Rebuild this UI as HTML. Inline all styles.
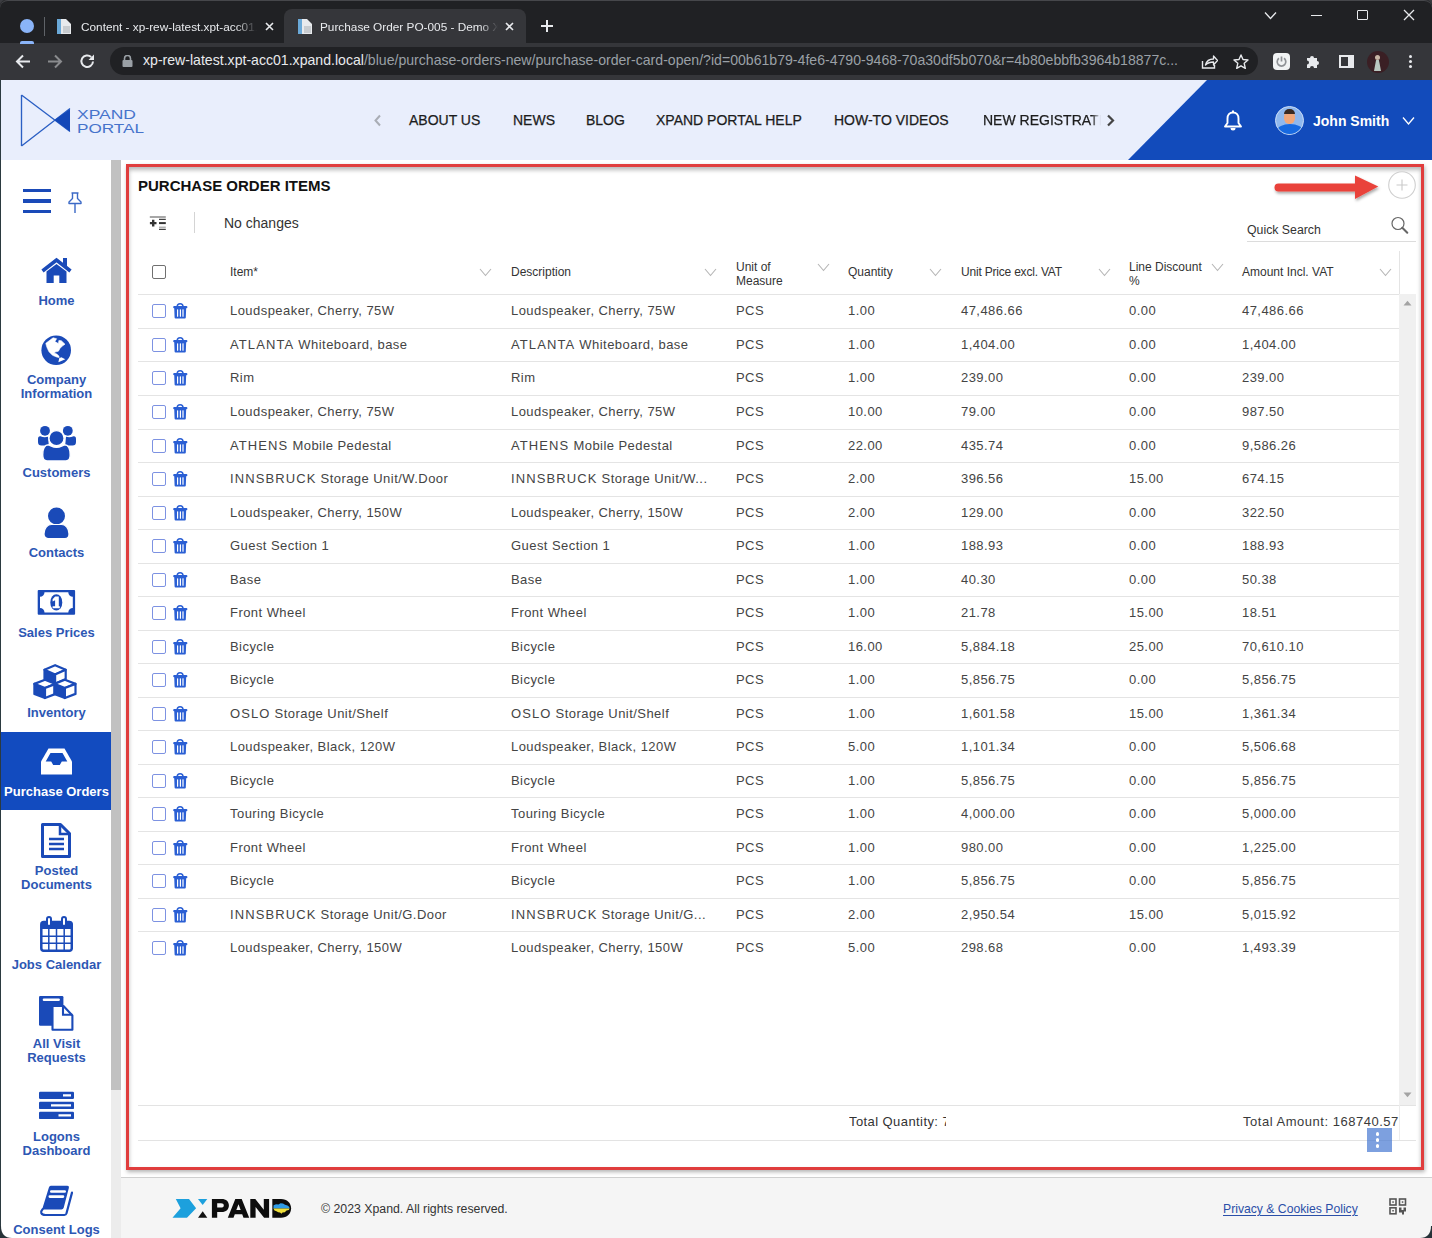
<!DOCTYPE html>
<html><head><meta charset="utf-8">
<style>
*{box-sizing:border-box;margin:0;padding:0}
html,body{width:1432px;height:1238px;overflow:hidden;background:#fff;font-family:"Liberation Sans",sans-serif}
.a{position:absolute}
#tabs{position:absolute;left:0;top:0;width:1432px;height:43px;background:#202124;border-top:1px solid #46474b;border-radius:8px 8px 0 0;box-shadow:0 0 0 1px #2a2b2e}
#tool{position:absolute;left:0;top:43px;width:1432px;height:37px;background:#35363a}
.tab{position:absolute;color:#e8eaed;font-size:11.8px;white-space:nowrap}
#omni{position:absolute;left:110px;top:47px;width:1148px;height:28px;border-radius:14px;background:#202124}
#hdr{position:absolute;left:0;top:80px;width:1432px;height:80px;background:#e9eefc}
.nav{position:absolute;top:112px;font-size:14px;color:#1c1c1c;white-space:nowrap;-webkit-text-stroke:0.25px #1c1c1c;margin-left:1px}
#side{position:absolute;left:0;top:160px;width:111px;height:1078px;background:#fff}
#sbtrack{position:absolute;left:111px;top:160px;width:10px;height:1078px;background:#ececec}
#sbthumb{position:absolute;left:111px;top:160px;width:10px;height:930px;background:#c1c1c1}
.si{position:absolute;left:1px;width:111px;text-align:center;color:#2d57b4;font-size:13px;line-height:14px;font-weight:bold}
#main{position:absolute;left:121px;top:160px;width:1311px;height:1017px;background:#fff}
#red{position:absolute;left:126px;top:164px;width:1298px;height:1006px;border:3px solid #e03d3d;box-shadow:1px 2px 4px rgba(0,0,0,0.3),inset 0 3px 4px rgba(0,0,0,0.28)}
.row{position:absolute;left:138px;width:1261px;height:34px;border-top:1px solid #e4e4e4}
.row .c{position:absolute;top:8px;font-size:13px;color:#444;white-space:nowrap;letter-spacing:0.45px}
.row .cb{position:absolute;left:14px;top:9px;width:14px;height:14px;border:1.5px solid #7d92e2;border-radius:2px}
.row .tr{position:absolute;left:35px;top:8px}
.hc{position:absolute;font-size:12px;color:#333;line-height:13px;white-space:nowrap}
.chev{position:absolute;top:266px}
#footer{position:absolute;left:121px;top:1177px;width:1311px;height:61px;background:#f5f5f5;border-top:1px solid #cfcfcf}
</style></head><body>
<!-- browser chrome -->
<div class="a" style="left:0;top:0;width:1432px;height:12px;background:#3b3c40"></div>
<div id="tabs"></div>
<div id="tool"></div>
<div id="omni"></div>
<!-- left profile dot -->
<div class="a" style="left:20px;top:19px;width:14px;height:14px;border-radius:50%;background:#8ab4f8"></div>
<div class="a" style="left:20px;top:41px;width:14px;height:3px;border-radius:2px 2px 0 0;background:#8ab4f8"></div>
<div class="a" style="left:44px;top:17px;width:1px;height:19px;background:#5f6368"></div>
<!-- tab 1 -->
<svg class="a" style="left:56px;top:18px" width="16" height="16" viewBox="0 0 16 16"><path d="M1 1h9l5 5v10H1z" fill="#e8eaed"/><rect x="1" y="1" width="4" height="15" fill="#6aa9d8"/><path d="M7 8h7v7H7z" fill="#c8ccd0"/></svg>
<div class="tab" style="left:81px;top:19.5px;width:176px;overflow:hidden;-webkit-mask-image:linear-gradient(90deg,#000 88%,transparent)">Content - xp-rew-latest.xpt-acc01.xpand</div>
<svg class="a" style="left:265px;top:22px" width="9" height="9" viewBox="0 0 9 9"><path d="M1 1L8 8M8 1L1 8" stroke="#e8eaed" stroke-width="1.6"/></svg>
<!-- active tab -->
<div class="a" style="left:284px;top:9px;width:242px;height:35px;background:#35363a;border-radius:8px 8px 0 0"></div>
<svg class="a" style="left:297px;top:18px" width="16" height="16" viewBox="0 0 16 16"><path d="M1 1h9l5 5v10H1z" fill="#e8eaed"/><rect x="1" y="1" width="4" height="15" fill="#6aa9d8"/><path d="M7 8h7v7H7z" fill="#c8ccd0"/></svg>
<div class="tab" style="left:320px;top:19.5px;width:178px;overflow:hidden;-webkit-mask-image:linear-gradient(90deg,#000 90%,transparent)">Purchase Order PO-005 - Demo Xpand</div>
<svg class="a" style="left:505px;top:22px" width="9" height="9" viewBox="0 0 9 9"><path d="M1 1L8 8M8 1L1 8" stroke="#e8eaed" stroke-width="1.6"/></svg>
<svg class="a" style="left:540px;top:19px" width="14" height="14" viewBox="0 0 14 14"><path d="M7 1v12M1 7h12" stroke="#e8eaed" stroke-width="2"/></svg>
<!-- window controls -->
<svg class="a" style="left:1264px;top:11px" width="13" height="9" viewBox="0 0 13 9"><path d="M1 1.5l5.5 6 5.5-6" stroke="#e8eaed" stroke-width="1.3" fill="none"/></svg>
<div class="a" style="left:1311px;top:15px;width:11px;height:1.3px;background:#e8eaed"></div>
<div class="a" style="left:1357px;top:10px;width:11px;height:10px;border:1.3px solid #e8eaed;border-radius:1px"></div>
<svg class="a" style="left:1403px;top:9px" width="12" height="12" viewBox="0 0 12 12"><path d="M1 1L11 11M11 1L1 11" stroke="#e8eaed" stroke-width="1.3"/></svg>
<!-- toolbar -->
<svg class="a" style="left:15px;top:54px" width="16" height="15" viewBox="0 0 16 15"><path d="M15 7.5H2.5M8 1.5l-6 6 6 6" stroke="#e8eaed" stroke-width="2" fill="none"/></svg>
<svg class="a" style="left:47px;top:54px" width="16" height="15" viewBox="0 0 16 15"><path d="M1 7.5h12.5M8 1.5l6 6-6 6" stroke="#8a8b8e" stroke-width="2" fill="none"/></svg>
<svg class="a" style="left:79px;top:53px" width="17" height="17" viewBox="0 0 17 17"><path d="M14 8.5A5.8 5.8 0 1 1 12.2 4" stroke="#e8eaed" stroke-width="2" fill="none"/><path d="M15 1.5v5.5h-5.5z" fill="#e8eaed"/></svg>
<svg class="a" style="left:122px;top:55px" width="11" height="12" viewBox="0 0 11 12"><path d="M2.5 5V3.5a3 3 0 0 1 6 0V5" stroke="#9aa0a6" stroke-width="1.6" fill="none"/><rect x="0.5" y="5" width="10" height="7" rx="1" fill="#9aa0a6"/></svg>
<div class="a" style="left:143px;top:52px;font-size:14.1px;color:#e8eaed;white-space:nowrap">xp-rew-latest.xpt-acc01.xpand.local<span style="color:#9aa0a6">/blue/purchase-orders-new/purchase-order-card-open/?id=00b61b79-4fe6-4790-9468-70a30df5b070&amp;r=4b80ebbfb3964b18877c...</span></div>
<svg class="a" style="left:1201px;top:54px" width="17" height="15" viewBox="0 0 17 15"><path d="M1.5 7v7h12V11" stroke="#e8eaed" stroke-width="1.4" fill="none"/><path d="M4.5 11c1-4 4-6 8-6V2l4 4.5-4 4.5V8c-3 0-6 1-8 3z" stroke="#e8eaed" stroke-width="1.3" fill="none" stroke-linejoin="round"/></svg>
<svg class="a" style="left:1233px;top:54px" width="16" height="15" viewBox="0 0 16 15"><path d="M8 1l2 4.5 5 .5-3.8 3.3 1.1 5L8 11.8 3.7 14.3l1.1-5L1 6l5-.5z" stroke="#e8eaed" stroke-width="1.4" fill="none" stroke-linejoin="round"/></svg>
<div class="a" style="left:1273px;top:53px;width:17px;height:17px;border-radius:4px;background:#f1f3f4"></div>
<svg class="a" style="left:1275px;top:55px" width="13" height="13" viewBox="0 0 13 13"><path d="M4 3.3A4.3 4.3 0 1 0 9 3.3" stroke="#8f9296" stroke-width="1.7" fill="none"/><path d="M6.5 1.5v5" stroke="#8f9296" stroke-width="1.7"/></svg>
<svg class="a" style="left:1305px;top:53px" width="17" height="16" viewBox="0 0 17 16"><path d="M2 5h3a2 2 0 1 1 4 0h3v3a2 2 0 1 1 0 4v3H9a2 2 0 1 0-4 0H2v-3.5a2 2 0 1 0 0-4z" fill="#e8eaed"/></svg>
<div class="a" style="left:1339px;top:55px;width:15px;height:13px;border:2px solid #e8eaed;border-right-width:6px"></div>
<div class="a" style="left:1367px;top:51px;width:22px;height:22px;border-radius:50%;background:#3a1f24;overflow:hidden"><div style="position:absolute;left:8px;top:4px;width:5px;height:5px;border-radius:50%;background:#c9b7a6"></div><div style="position:absolute;left:7px;top:9px;width:7px;height:11px;background:#b9c7c0;clip-path:polygon(30% 0,70% 0,100% 100%,0 100%)"></div></div>
<div class="a" style="left:1409px;top:55px;width:3px;height:3px;border-radius:50%;background:#e8eaed;box-shadow:0 5px 0 #e8eaed,0 10px 0 #e8eaed"></div>

<!-- page header -->
<div id="hdr"></div>
<svg class="a" style="left:0;top:80px" width="1432" height="80" viewBox="0 80 1432 80">
<polygon points="1207,80 1432,80 1432,160 1128,160" fill="#124bbb"/>
<path d="M21.5 95V146M21.5 95L70 131.5M21.5 146L70 108.5" stroke="#2b5fc4" stroke-width="1.35" fill="none"/>
<polygon points="54.5,120 70,109 70,131.5" fill="#1448b8"/>
<text x="77" y="118.5" font-family="Liberation Sans" font-size="12.4" fill="#4673cb" textLength="59" lengthAdjust="spacingAndGlyphs">XPAND</text>
<text x="77" y="132.7" font-family="Liberation Sans" font-size="12.2" fill="#4673cb" textLength="67" lengthAdjust="spacingAndGlyphs">PORTAL</text>
</svg>
<svg class="a" style="left:373px;top:114px" width="9" height="13" viewBox="0 0 9 13"><path d="M7 1.5L2.5 6.5 7 11.5" stroke="#a9adb5" stroke-width="2" fill="none"/></svg>
<div class="nav" style="left:408px">ABOUT US</div>
<div class="nav" style="left:512px">NEWS</div>
<div class="nav" style="left:585px">BLOG</div>
<div class="nav" style="left:655px">XPAND PORTAL HELP</div>
<div class="nav" style="left:833px">HOW-TO VIDEOS</div>
<div class="nav" style="left:982px;width:118px;overflow:hidden;-webkit-mask-image:linear-gradient(90deg,#000 92%,transparent)">NEW REGISTRATION</div>
<svg class="a" style="left:1106px;top:114px" width="10" height="13" viewBox="0 0 10 13"><path d="M2 1.5L7 6.5 2 11.5" stroke="#444" stroke-width="2.2" fill="none"/></svg>
<svg class="a" style="left:1222px;top:110px" width="22" height="21" viewBox="0 0 22 21"><path d="M11 2.5c-3.5 0-5.5 2.6-5.5 6v4.5L3 16.5h16l-2.5-3.5V8.5c0-3.4-2-6-5.5-6z" stroke="#fff" stroke-width="1.9" fill="none" stroke-linejoin="round"/><path d="M8.5 18a2.5 2.5 0 0 0 5 0z" fill="#fff"/><rect x="10" y="0.5" width="2" height="2.5" fill="#fff"/></svg>
<div class="a" style="left:1275px;top:106px;width:29px;height:29px;border-radius:50%;background:#8fb8ee;overflow:hidden;border:1.5px solid #c9dcf7">
<div style="position:absolute;left:8px;top:4px;width:11px;height:13px;border-radius:45%;background:#f0a77a"></div>
<div style="position:absolute;left:8px;top:2px;width:11px;height:5px;border-radius:5px 5px 0 0;background:#3a2a22"></div>
<div style="position:absolute;left:1px;top:17px;width:26px;height:14px;border-radius:50% 50% 0 0;background:#1769e0"></div>
</div>
<div class="a" style="left:1313px;top:112.5px;font-size:14px;font-weight:bold;color:#fff;white-space:nowrap">John Smith</div>
<svg class="a" style="left:1402px;top:116px" width="13" height="10" viewBox="0 0 13 10"><path d="M1 1.5l5.5 6.5 5.5-6.5" stroke="#fff" stroke-width="1.3" fill="none"/></svg>

<!-- sidebar -->
<div id="side"></div>
<div id="sbtrack"></div>
<div id="sbthumb"></div>
<div class="a" style="left:0;top:80px;width:1px;height:1158px;background:#2b3a40"></div>
<!-- hamburger + pin -->
<div class="a" style="left:23px;top:188.5px;width:28px;height:3.5px;background:#1a4ab8"></div>
<div class="a" style="left:23px;top:199.3px;width:28px;height:3.5px;background:#1a4ab8"></div>
<div class="a" style="left:23px;top:209.6px;width:28px;height:3.5px;background:#1a4ab8"></div>
<svg class="a" style="left:67px;top:192px" width="16" height="22" viewBox="0 0 16 22"><path d="M4.5 1h7M5.5 1v5.5L2 10v1.5h12V10L10.5 6.5V1M8 11.5V21" stroke="#3b69c6" stroke-width="1.4" fill="none" stroke-linejoin="round"/></svg>
<!-- Home -->
<svg class="a" style="left:40px;top:257px" width="33" height="27" viewBox="0 0 33 27"><path d="M2.5 14L16.5 3 30.5 14" stroke="#1a4ab8" stroke-width="3.6" fill="none" stroke-linejoin="miter"/><rect x="23" y="1" width="4" height="9" fill="#1a4ab8"/><path d="M6.5 14.5L16.5 7l10 7.5V26h-7.2v-7.5h-5.6V26H6.5z" fill="#1a4ab8"/></svg>
<div class="si" style="top:293.5px">Home</div>
<!-- Company -->
<svg class="a" style="left:38px;top:332px" width="36" height="36" viewBox="0 0 36 36"><circle cx="18.2" cy="18.3" r="14.8" fill="#1a4ab8"/><polygon points="7.8,11.3 15.1,5.8 18.6,6.7 16.9,9.6 20.4,11.6 20.9,8.4 23.3,8.7 27.0,12.2 24.7,13.7 22.1,16.3 20.4,19.2 16.9,20.1 16.6,21.2 18.9,22.1 20.9,24.1 21.2,25.6 18.6,25.0 14.5,23.3 11.0,19.8 9.3,16.3 8.4,13.7" fill="#fff" stroke="#fff" stroke-width="0.6" stroke-linejoin="round"/><polygon points="21.2,26.2 23.3,25.3 27.3,27.3 20.4,30.2" fill="#fff"/></svg>
<div class="si" style="top:373px;line-height:14.2px">Company<br>Information</div>
<!-- Customers -->
<svg class="a" style="left:34px;top:420px" width="46" height="46" viewBox="0 0 46 46"><path d="M4 19Q4 16 6.5 16.3Q10 17.8 14 16.8L14.8 25.6H7.5Q4 25.6 4 22Z" fill="#1a4ab8"/><path d="M42 19Q42 16 39.5 16.3Q36 17.8 32 16.8L31.2 25.6H38.5Q42 25.6 42 22Z" fill="#1a4ab8"/><circle cx="11" cy="10.8" r="4.9" fill="#1a4ab8"/><circle cx="33.8" cy="10.8" r="4.9" fill="#1a4ab8"/><circle cx="22.5" cy="18.2" r="7.6" fill="#1a4ab8" stroke="#fff" stroke-width="1.4"/><path d="M8.7 35C8.7 28 10.5 24.8 14.5 24.8C17 25.8 19.5 27.3 22.5 27.3C25.5 27.3 28 25.8 30.5 24.8C34.5 24.8 36.2 28 36.2 35C36.2 39 35 40.9 32 40.9H13C10 40.9 8.7 39 8.7 35Z" fill="#1a4ab8" stroke="#fff" stroke-width="1.4"/></svg>
<div class="si" style="top:466px">Customers</div>
<!-- Contacts -->
<svg class="a" style="left:43px;top:507px" width="27" height="32" viewBox="0 0 27 32"><circle cx="13.5" cy="9" r="8.5" fill="#1a4ab8"/><path d="M1 27c0-6 3.5-9.5 7.5-9.5h10c4 0 7.5 3.5 7.5 9.5 0 2.5-1.5 4.5-4 4.5H5c-2.5 0-4-2-4-4.5z" fill="#1a4ab8" stroke="#fff" stroke-width="1.2"/></svg>
<div class="si" style="top:546.3px">Contacts</div>
<!-- Sales Prices -->
<svg class="a" style="left:32px;top:585px" width="48" height="35" viewBox="0 0 48 35"><rect x="5.7" y="5" width="37.4" height="24.7" rx="1" fill="#1a4ab8"/><path d="M12.5 7.2H36.3A4.5 4.5 0 0 0 40.8 11.7V23A4.5 4.5 0 0 0 36.3 27.5H12.5A4.5 4.5 0 0 0 8 23V11.7A4.5 4.5 0 0 0 12.5 7.2Z" fill="#fff"/><ellipse cx="24.3" cy="17.4" rx="6" ry="8.2" fill="#1a4ab8"/><path d="M23.1 11.4H26.8V21.3H27.8V23.3H20.6V21.3H23.1V15.3L20.6 16.4V14.2Z" fill="#fff"/></svg>
<div class="si" style="top:625.7px">Sales Prices</div>
<!-- Inventory -->
<svg class="a" style="left:30px;top:660px" width="50" height="42" viewBox="0 0 50 42"><polygon points="14.5,9.8 25.1,14.4 25.1,23.7 14.5,19.1" fill="#1a4ab8" stroke="#1a4ab8" stroke-width="2.2" stroke-linejoin="round"/><polygon points="25.1,5.2 14.5,9.8 25.1,14.4 35.7,9.8" fill="#fff" stroke="#1a4ab8" stroke-width="2.2" stroke-linejoin="round"/><polygon points="25.1,14.4 35.7,9.8 35.7,19.1 25.1,23.7" fill="#fff" stroke="#1a4ab8" stroke-width="2.2" stroke-linejoin="round"/><polygon points="4.4,23.9 15.0,28.0 15.0,38.0 4.4,33.9" fill="#1a4ab8" stroke="#1a4ab8" stroke-width="2.2" stroke-linejoin="round"/><polygon points="15.0,19.8 4.4,23.9 15.0,28.0 25.6,23.9" fill="#fff" stroke="#1a4ab8" stroke-width="2.2" stroke-linejoin="round"/><polygon points="15.0,28.0 25.6,23.9 25.6,33.9 15.0,38.0" fill="#fff" stroke="#1a4ab8" stroke-width="2.2" stroke-linejoin="round"/><polygon points="24.3,23.9 34.9,28.0 34.9,38.0 24.3,33.9" fill="#1a4ab8" stroke="#1a4ab8" stroke-width="2.2" stroke-linejoin="round"/><polygon points="34.9,19.8 24.3,23.9 34.9,28.0 45.5,23.9" fill="#fff" stroke="#1a4ab8" stroke-width="2.2" stroke-linejoin="round"/><polygon points="34.9,28.0 45.5,23.9 45.5,33.9 34.9,38.0" fill="#fff" stroke="#1a4ab8" stroke-width="2.2" stroke-linejoin="round"/></svg>
<div class="si" style="top:705.7px">Inventory</div>
<!-- Purchase Orders (active) -->
<div class="a" style="left:1px;top:732px;width:110px;height:78px;background:#124bbf"></div>
<svg class="a" style="left:40px;top:748px" width="33" height="27" viewBox="0 0 33 27"><path d="M8.5 0.5h16l7.5 13v13H1v-13z" fill="#fff"/><path d="M10.5 5h12l4.8 8.5h-5.5l-2 3.5h-6.6l-2-3.5H5.7z" fill="#124bbf"/></svg>
<div class="si" style="top:784.5px;color:#fff">Purchase Orders</div>
<!-- Posted Documents -->
<svg class="a" style="left:40px;top:822px" width="33" height="37" viewBox="0 0 33 37"><path d="M2.5 2.5h18l9 9v23h-27z" stroke="#1a4ab8" stroke-width="3" fill="none" stroke-linejoin="round"/><path d="M20 2v10h10" stroke="#1a4ab8" stroke-width="2.5" fill="none"/><path d="M9 17h15M9 22h15M9 27h15" stroke="#1a4ab8" stroke-width="2.6"/></svg>
<div class="si" style="top:863.7px">Posted<br>Documents</div>
<!-- Jobs Calendar -->
<svg class="a" style="left:40px;top:916px" width="33" height="36" viewBox="0 0 33 36"><rect x="1.3" y="6" width="30.5" height="28.8" rx="2.5" fill="#fff" stroke="#1a4ab8" stroke-width="2.5"/><rect x="1.3" y="6" width="30.5" height="7" fill="#1a4ab8"/><rect x="7" y="1" width="4" height="9" rx="2" fill="#fff" stroke="#1a4ab8" stroke-width="2"/><rect x="22" y="1" width="4" height="9" rx="2" fill="#fff" stroke="#1a4ab8" stroke-width="2"/><path d="M8.8 13v21M16.5 13v21M24.2 13v21M1.5 20.3h30M1.5 27.3h30" stroke="#1a4ab8" stroke-width="1.5"/></svg>
<div class="si" style="top:957.7px">Jobs Calendar</div>
<!-- All Visit Requests -->
<svg class="a" style="left:38px;top:995px" width="38" height="38" viewBox="0 0 38 38"><rect x="1" y="1.1" width="24.4" height="29.6" rx="1.2" fill="#1a4ab8"/><path d="M5.9 4.8H20.7" stroke="#fff" stroke-width="2.4" stroke-linecap="round"/><path d="M14.5 11H25.5L34.4 20.5V34.7H14.5Z" fill="#fff" stroke="#1a4ab8" stroke-width="2.1" stroke-linejoin="round"/><path d="M25 11V19.8H34.4" fill="none" stroke="#1a4ab8" stroke-width="2.1"/></svg>
<div class="si" style="top:1036.5px">All Visit<br>Requests</div>
<!-- Logons Dashboard -->
<svg class="a" style="left:38px;top:1091px" width="37" height="29" viewBox="0 0 37 29"><rect x="1" y="0.7" width="35" height="7.3" rx="1.2" fill="#1a4ab8"/><rect x="1" y="10.8" width="35" height="7.3" rx="1.2" fill="#1a4ab8"/><rect x="1" y="20.8" width="35" height="7.3" rx="1.2" fill="#1a4ab8"/><path d="M25 4.3h8M13 14.4h20M20.5 24.4h12.5" stroke="#fff" stroke-width="2.2"/></svg>
<div class="si" style="top:1129.7px;line-height:14.1px">Logons<br>Dashboard</div>
<!-- Consent Logs -->
<svg class="a" style="left:34px;top:1180px" width="46" height="42" viewBox="0 0 46 42"><path d="M16.8 5.8H33.3Q35.4 5.8 34.9 7.8L29.7 27.8Q29.2 29.6 27.4 29.6H8.1L14.9 7.6Q15.4 5.8 16.8 5.8Z" fill="#1a4ab8"/><path d="M17.3 11.5H30.7M15.8 16.6H29" stroke="#fff" stroke-width="2.6" stroke-linecap="round"/><path d="M8.6 29.2Q6.6 31.3 7.3 33Q8.2 35 11.5 35H30.3Q32 35 32.5 33.3L38 12.6" fill="none" stroke="#1a4ab8" stroke-width="2.2" stroke-linecap="round"/></svg>
<div class="si" style="top:1223.2px">Consent Logs</div>

<!-- main -->
<div id="main"></div>
<div id="red"></div>

<div class="a" style="left:138px;top:177px;font-size:15px;font-weight:bold;color:#111">PURCHASE ORDER ITEMS</div>
<div class="a" style="left:224px;top:215px;font-size:14px;color:#333">No changes</div>
<svg class="a" style="left:148px;top:214px" width="20" height="18" viewBox="0 0 20 18"><path d="M1.8 3h16" stroke="#8a8a8a" stroke-width="1.5"/><path d="M11 5.4h6.8M11 15.4h6.8" stroke="#444" stroke-width="1.1"/><path d="M11 9.1h6.8" stroke="#333" stroke-width="2"/><path d="M11 13.2h6.8" stroke="#9a9a9a" stroke-width="1.1"/><path d="M5.2 5.8v6.6M1.9 9.1h6.6" stroke="#333" stroke-width="2.4"/></svg>
<div class="a" style="left:193.5px;top:212px;width:1.5px;height:21px;background:#d4d4d4"></div>
<!-- red arrow -->
<svg class="a" style="left:1268px;top:170px" width="116" height="36" viewBox="0 0 116 36"><defs><filter id="sh" x="-10%" y="-30%" width="130%" height="170%"><feDropShadow dx="1" dy="2" stdDeviation="1.5" flood-color="#000" flood-opacity="0.35"/></filter></defs><g filter="url(#sh)"><path d="M10.5 17.5h78" stroke="#e9423b" stroke-width="8" stroke-linecap="round"/><polygon points="87,5.4 110.3,16.5 87,28.9" fill="#e9423b"/></g></svg>
<svg class="a" style="left:1387px;top:170px" width="30" height="30" viewBox="0 0 30 30"><circle cx="15" cy="15" r="13.3" stroke="#cfcfcf" stroke-width="1.1" fill="#fff"/><path d="M15 9.5v11M9.5 15h11" stroke="#c9c9c9" stroke-width="1.1"/></svg>
<!-- quick search -->
<div class="a" style="left:1247px;top:222.5px;font-size:12.3px;color:#333;white-space:nowrap">Quick Search</div>
<div class="a" style="left:1247px;top:241px;width:169px;height:1px;background:#dcdcdc"></div>
<svg class="a" style="left:1390px;top:216px" width="20" height="19" viewBox="0 0 20 19"><circle cx="8" cy="7.5" r="6" stroke="#666" stroke-width="1.2" fill="none"/><path d="M12.3 11.8l5 5" stroke="#666" stroke-width="2" stroke-linecap="round"/></svg>

<!-- header row -->
<div class="a" style="left:152px;top:265px;width:14px;height:14px;border:1.6px solid #707070;border-radius:2px"></div>
<div class="hc" style="left:230px;top:266px">Item*</div>
<div class="hc" style="left:511px;top:266px">Description</div>
<div class="hc" style="left:736px;top:259.5px;line-height:14.3px">Unit of<br>Measure</div>
<div class="hc" style="left:848px;top:266px">Quantity</div>
<div class="hc" style="left:961px;top:266px;letter-spacing:-0.2px">Unit Price excl. VAT</div>
<div class="hc" style="left:1129px;top:259.5px;line-height:14.3px">Line Discount<br>%</div>
<div class="hc" style="left:1242px;top:266px">Amount Incl. VAT</div>
<svg class="a" style="left:479px;top:268px" width="13" height="9" viewBox="0 0 13 9"><path d="M1 1l5.5 6.5L12 1" stroke="#b5b5b5" stroke-width="1.1" fill="none"/></svg><svg class="a" style="left:704px;top:268px" width="13" height="9" viewBox="0 0 13 9"><path d="M1 1l5.5 6.5L12 1" stroke="#b5b5b5" stroke-width="1.1" fill="none"/></svg><svg class="a" style="left:817px;top:263px" width="13" height="9" viewBox="0 0 13 9"><path d="M1 1l5.5 6.5L12 1" stroke="#b5b5b5" stroke-width="1.1" fill="none"/></svg><svg class="a" style="left:929px;top:268px" width="13" height="9" viewBox="0 0 13 9"><path d="M1 1l5.5 6.5L12 1" stroke="#b5b5b5" stroke-width="1.1" fill="none"/></svg><svg class="a" style="left:1098px;top:268px" width="13" height="9" viewBox="0 0 13 9"><path d="M1 1l5.5 6.5L12 1" stroke="#b5b5b5" stroke-width="1.1" fill="none"/></svg><svg class="a" style="left:1211px;top:263px" width="13" height="9" viewBox="0 0 13 9"><path d="M1 1l5.5 6.5L12 1" stroke="#b5b5b5" stroke-width="1.1" fill="none"/></svg><svg class="a" style="left:1379px;top:268px" width="13" height="9" viewBox="0 0 13 9"><path d="M1 1l5.5 6.5L12 1" stroke="#b5b5b5" stroke-width="1.1" fill="none"/></svg>
<div class="a" style="left:1399px;top:251px;width:1px;height:43px;background:#e4e4e4"></div>
<!-- right scrollbar -->
<div class="a" style="left:1399px;top:294px;width:17px;height:811px;background:#f0f0f0"></div>
<svg class="a" style="left:1403px;top:300px" width="9" height="6" viewBox="0 0 9 6"><path d="M0.5 5.5L4.5 0.8 8.5 5.5z" fill="#a3a3a3"/></svg>
<svg class="a" style="left:1403px;top:1092px" width="9" height="6" viewBox="0 0 9 6"><path d="M0.5 0.5L4.5 5.2 8.5 0.5z" fill="#a3a3a3"/></svg>
<div class="row" style="top:294px"><span class="cb"></span><svg class="tr" width="15" height="16" viewBox="0 0 15 16"><path d="M4.2 3.6C4.2 1.6 5.2 0.8 7.1 0.8S10 1.6 10 3.6" stroke="#2a5fd4" stroke-width="1.5" fill="none"/><rect x="0.2" y="3" width="14.2" height="2.2" rx="1" fill="#2a5fd4"/><path d="M1.2 4.5h12l-0.4 10c0 .6-.4.9-1 .9H2.6c-.6 0-1-.3-1-.9z" fill="#2a5fd4"/><rect x="4" y="6.2" width="1.2" height="7.6" rx=".5" fill="#fff"/><rect x="6.8" y="6.2" width="1.2" height="7.6" rx=".5" fill="#fff"/><rect x="9.4" y="6.2" width="1.2" height="7.6" rx=".5" fill="#fff"/></svg><span class="c" style="left:92px">Loudspeaker, Cherry, 75W</span><span class="c" style="left:373px">Loudspeaker, Cherry, 75W</span><span class="c" style="left:598px">PCS</span><span class="c" style="left:710px">1.00</span><span class="c" style="left:823px">47,486.66</span><span class="c" style="left:991px">0.00</span><span class="c" style="left:1104px">47,486.66</span></div>
<div class="row" style="top:328px"><span class="cb"></span><svg class="tr" width="15" height="16" viewBox="0 0 15 16"><path d="M4.2 3.6C4.2 1.6 5.2 0.8 7.1 0.8S10 1.6 10 3.6" stroke="#2a5fd4" stroke-width="1.5" fill="none"/><rect x="0.2" y="3" width="14.2" height="2.2" rx="1" fill="#2a5fd4"/><path d="M1.2 4.5h12l-0.4 10c0 .6-.4.9-1 .9H2.6c-.6 0-1-.3-1-.9z" fill="#2a5fd4"/><rect x="4" y="6.2" width="1.2" height="7.6" rx=".5" fill="#fff"/><rect x="6.8" y="6.2" width="1.2" height="7.6" rx=".5" fill="#fff"/><rect x="9.4" y="6.2" width="1.2" height="7.6" rx=".5" fill="#fff"/></svg><span class="c" style="left:92px"><span style="letter-spacing:1.1px">ATLANTA</span> Whiteboard, base</span><span class="c" style="left:373px"><span style="letter-spacing:1.1px">ATLANTA</span> Whiteboard, base</span><span class="c" style="left:598px">PCS</span><span class="c" style="left:710px">1.00</span><span class="c" style="left:823px">1,404.00</span><span class="c" style="left:991px">0.00</span><span class="c" style="left:1104px">1,404.00</span></div>
<div class="row" style="top:361px"><span class="cb"></span><svg class="tr" width="15" height="16" viewBox="0 0 15 16"><path d="M4.2 3.6C4.2 1.6 5.2 0.8 7.1 0.8S10 1.6 10 3.6" stroke="#2a5fd4" stroke-width="1.5" fill="none"/><rect x="0.2" y="3" width="14.2" height="2.2" rx="1" fill="#2a5fd4"/><path d="M1.2 4.5h12l-0.4 10c0 .6-.4.9-1 .9H2.6c-.6 0-1-.3-1-.9z" fill="#2a5fd4"/><rect x="4" y="6.2" width="1.2" height="7.6" rx=".5" fill="#fff"/><rect x="6.8" y="6.2" width="1.2" height="7.6" rx=".5" fill="#fff"/><rect x="9.4" y="6.2" width="1.2" height="7.6" rx=".5" fill="#fff"/></svg><span class="c" style="left:92px">Rim</span><span class="c" style="left:373px">Rim</span><span class="c" style="left:598px">PCS</span><span class="c" style="left:710px">1.00</span><span class="c" style="left:823px">239.00</span><span class="c" style="left:991px">0.00</span><span class="c" style="left:1104px">239.00</span></div>
<div class="row" style="top:395px"><span class="cb"></span><svg class="tr" width="15" height="16" viewBox="0 0 15 16"><path d="M4.2 3.6C4.2 1.6 5.2 0.8 7.1 0.8S10 1.6 10 3.6" stroke="#2a5fd4" stroke-width="1.5" fill="none"/><rect x="0.2" y="3" width="14.2" height="2.2" rx="1" fill="#2a5fd4"/><path d="M1.2 4.5h12l-0.4 10c0 .6-.4.9-1 .9H2.6c-.6 0-1-.3-1-.9z" fill="#2a5fd4"/><rect x="4" y="6.2" width="1.2" height="7.6" rx=".5" fill="#fff"/><rect x="6.8" y="6.2" width="1.2" height="7.6" rx=".5" fill="#fff"/><rect x="9.4" y="6.2" width="1.2" height="7.6" rx=".5" fill="#fff"/></svg><span class="c" style="left:92px">Loudspeaker, Cherry, 75W</span><span class="c" style="left:373px">Loudspeaker, Cherry, 75W</span><span class="c" style="left:598px">PCS</span><span class="c" style="left:710px">10.00</span><span class="c" style="left:823px">79.00</span><span class="c" style="left:991px">0.00</span><span class="c" style="left:1104px">987.50</span></div>
<div class="row" style="top:429px"><span class="cb"></span><svg class="tr" width="15" height="16" viewBox="0 0 15 16"><path d="M4.2 3.6C4.2 1.6 5.2 0.8 7.1 0.8S10 1.6 10 3.6" stroke="#2a5fd4" stroke-width="1.5" fill="none"/><rect x="0.2" y="3" width="14.2" height="2.2" rx="1" fill="#2a5fd4"/><path d="M1.2 4.5h12l-0.4 10c0 .6-.4.9-1 .9H2.6c-.6 0-1-.3-1-.9z" fill="#2a5fd4"/><rect x="4" y="6.2" width="1.2" height="7.6" rx=".5" fill="#fff"/><rect x="6.8" y="6.2" width="1.2" height="7.6" rx=".5" fill="#fff"/><rect x="9.4" y="6.2" width="1.2" height="7.6" rx=".5" fill="#fff"/></svg><span class="c" style="left:92px"><span style="letter-spacing:1.1px">ATHENS</span> Mobile Pedestal</span><span class="c" style="left:373px"><span style="letter-spacing:1.1px">ATHENS</span> Mobile Pedestal</span><span class="c" style="left:598px">PCS</span><span class="c" style="left:710px">22.00</span><span class="c" style="left:823px">435.74</span><span class="c" style="left:991px">0.00</span><span class="c" style="left:1104px">9,586.26</span></div>
<div class="row" style="top:462px"><span class="cb"></span><svg class="tr" width="15" height="16" viewBox="0 0 15 16"><path d="M4.2 3.6C4.2 1.6 5.2 0.8 7.1 0.8S10 1.6 10 3.6" stroke="#2a5fd4" stroke-width="1.5" fill="none"/><rect x="0.2" y="3" width="14.2" height="2.2" rx="1" fill="#2a5fd4"/><path d="M1.2 4.5h12l-0.4 10c0 .6-.4.9-1 .9H2.6c-.6 0-1-.3-1-.9z" fill="#2a5fd4"/><rect x="4" y="6.2" width="1.2" height="7.6" rx=".5" fill="#fff"/><rect x="6.8" y="6.2" width="1.2" height="7.6" rx=".5" fill="#fff"/><rect x="9.4" y="6.2" width="1.2" height="7.6" rx=".5" fill="#fff"/></svg><span class="c" style="left:92px"><span style="letter-spacing:1.1px">INNSBRUCK</span> Storage Unit/W.Door</span><span class="c" style="left:373px"><span style="letter-spacing:1.1px">INNSBRUCK</span> Storage Unit/W...</span><span class="c" style="left:598px">PCS</span><span class="c" style="left:710px">2.00</span><span class="c" style="left:823px">396.56</span><span class="c" style="left:991px">15.00</span><span class="c" style="left:1104px">674.15</span></div>
<div class="row" style="top:496px"><span class="cb"></span><svg class="tr" width="15" height="16" viewBox="0 0 15 16"><path d="M4.2 3.6C4.2 1.6 5.2 0.8 7.1 0.8S10 1.6 10 3.6" stroke="#2a5fd4" stroke-width="1.5" fill="none"/><rect x="0.2" y="3" width="14.2" height="2.2" rx="1" fill="#2a5fd4"/><path d="M1.2 4.5h12l-0.4 10c0 .6-.4.9-1 .9H2.6c-.6 0-1-.3-1-.9z" fill="#2a5fd4"/><rect x="4" y="6.2" width="1.2" height="7.6" rx=".5" fill="#fff"/><rect x="6.8" y="6.2" width="1.2" height="7.6" rx=".5" fill="#fff"/><rect x="9.4" y="6.2" width="1.2" height="7.6" rx=".5" fill="#fff"/></svg><span class="c" style="left:92px">Loudspeaker, Cherry, 150W</span><span class="c" style="left:373px">Loudspeaker, Cherry, 150W</span><span class="c" style="left:598px">PCS</span><span class="c" style="left:710px">2.00</span><span class="c" style="left:823px">129.00</span><span class="c" style="left:991px">0.00</span><span class="c" style="left:1104px">322.50</span></div>
<div class="row" style="top:529px"><span class="cb"></span><svg class="tr" width="15" height="16" viewBox="0 0 15 16"><path d="M4.2 3.6C4.2 1.6 5.2 0.8 7.1 0.8S10 1.6 10 3.6" stroke="#2a5fd4" stroke-width="1.5" fill="none"/><rect x="0.2" y="3" width="14.2" height="2.2" rx="1" fill="#2a5fd4"/><path d="M1.2 4.5h12l-0.4 10c0 .6-.4.9-1 .9H2.6c-.6 0-1-.3-1-.9z" fill="#2a5fd4"/><rect x="4" y="6.2" width="1.2" height="7.6" rx=".5" fill="#fff"/><rect x="6.8" y="6.2" width="1.2" height="7.6" rx=".5" fill="#fff"/><rect x="9.4" y="6.2" width="1.2" height="7.6" rx=".5" fill="#fff"/></svg><span class="c" style="left:92px">Guest Section 1</span><span class="c" style="left:373px">Guest Section 1</span><span class="c" style="left:598px">PCS</span><span class="c" style="left:710px">1.00</span><span class="c" style="left:823px">188.93</span><span class="c" style="left:991px">0.00</span><span class="c" style="left:1104px">188.93</span></div>
<div class="row" style="top:563px"><span class="cb"></span><svg class="tr" width="15" height="16" viewBox="0 0 15 16"><path d="M4.2 3.6C4.2 1.6 5.2 0.8 7.1 0.8S10 1.6 10 3.6" stroke="#2a5fd4" stroke-width="1.5" fill="none"/><rect x="0.2" y="3" width="14.2" height="2.2" rx="1" fill="#2a5fd4"/><path d="M1.2 4.5h12l-0.4 10c0 .6-.4.9-1 .9H2.6c-.6 0-1-.3-1-.9z" fill="#2a5fd4"/><rect x="4" y="6.2" width="1.2" height="7.6" rx=".5" fill="#fff"/><rect x="6.8" y="6.2" width="1.2" height="7.6" rx=".5" fill="#fff"/><rect x="9.4" y="6.2" width="1.2" height="7.6" rx=".5" fill="#fff"/></svg><span class="c" style="left:92px">Base</span><span class="c" style="left:373px">Base</span><span class="c" style="left:598px">PCS</span><span class="c" style="left:710px">1.00</span><span class="c" style="left:823px">40.30</span><span class="c" style="left:991px">0.00</span><span class="c" style="left:1104px">50.38</span></div>
<div class="row" style="top:596px"><span class="cb"></span><svg class="tr" width="15" height="16" viewBox="0 0 15 16"><path d="M4.2 3.6C4.2 1.6 5.2 0.8 7.1 0.8S10 1.6 10 3.6" stroke="#2a5fd4" stroke-width="1.5" fill="none"/><rect x="0.2" y="3" width="14.2" height="2.2" rx="1" fill="#2a5fd4"/><path d="M1.2 4.5h12l-0.4 10c0 .6-.4.9-1 .9H2.6c-.6 0-1-.3-1-.9z" fill="#2a5fd4"/><rect x="4" y="6.2" width="1.2" height="7.6" rx=".5" fill="#fff"/><rect x="6.8" y="6.2" width="1.2" height="7.6" rx=".5" fill="#fff"/><rect x="9.4" y="6.2" width="1.2" height="7.6" rx=".5" fill="#fff"/></svg><span class="c" style="left:92px">Front Wheel</span><span class="c" style="left:373px">Front Wheel</span><span class="c" style="left:598px">PCS</span><span class="c" style="left:710px">1.00</span><span class="c" style="left:823px">21.78</span><span class="c" style="left:991px">15.00</span><span class="c" style="left:1104px">18.51</span></div>
<div class="row" style="top:630px"><span class="cb"></span><svg class="tr" width="15" height="16" viewBox="0 0 15 16"><path d="M4.2 3.6C4.2 1.6 5.2 0.8 7.1 0.8S10 1.6 10 3.6" stroke="#2a5fd4" stroke-width="1.5" fill="none"/><rect x="0.2" y="3" width="14.2" height="2.2" rx="1" fill="#2a5fd4"/><path d="M1.2 4.5h12l-0.4 10c0 .6-.4.9-1 .9H2.6c-.6 0-1-.3-1-.9z" fill="#2a5fd4"/><rect x="4" y="6.2" width="1.2" height="7.6" rx=".5" fill="#fff"/><rect x="6.8" y="6.2" width="1.2" height="7.6" rx=".5" fill="#fff"/><rect x="9.4" y="6.2" width="1.2" height="7.6" rx=".5" fill="#fff"/></svg><span class="c" style="left:92px">Bicycle</span><span class="c" style="left:373px">Bicycle</span><span class="c" style="left:598px">PCS</span><span class="c" style="left:710px">16.00</span><span class="c" style="left:823px">5,884.18</span><span class="c" style="left:991px">25.00</span><span class="c" style="left:1104px">70,610.10</span></div>
<div class="row" style="top:663px"><span class="cb"></span><svg class="tr" width="15" height="16" viewBox="0 0 15 16"><path d="M4.2 3.6C4.2 1.6 5.2 0.8 7.1 0.8S10 1.6 10 3.6" stroke="#2a5fd4" stroke-width="1.5" fill="none"/><rect x="0.2" y="3" width="14.2" height="2.2" rx="1" fill="#2a5fd4"/><path d="M1.2 4.5h12l-0.4 10c0 .6-.4.9-1 .9H2.6c-.6 0-1-.3-1-.9z" fill="#2a5fd4"/><rect x="4" y="6.2" width="1.2" height="7.6" rx=".5" fill="#fff"/><rect x="6.8" y="6.2" width="1.2" height="7.6" rx=".5" fill="#fff"/><rect x="9.4" y="6.2" width="1.2" height="7.6" rx=".5" fill="#fff"/></svg><span class="c" style="left:92px">Bicycle</span><span class="c" style="left:373px">Bicycle</span><span class="c" style="left:598px">PCS</span><span class="c" style="left:710px">1.00</span><span class="c" style="left:823px">5,856.75</span><span class="c" style="left:991px">0.00</span><span class="c" style="left:1104px">5,856.75</span></div>
<div class="row" style="top:697px"><span class="cb"></span><svg class="tr" width="15" height="16" viewBox="0 0 15 16"><path d="M4.2 3.6C4.2 1.6 5.2 0.8 7.1 0.8S10 1.6 10 3.6" stroke="#2a5fd4" stroke-width="1.5" fill="none"/><rect x="0.2" y="3" width="14.2" height="2.2" rx="1" fill="#2a5fd4"/><path d="M1.2 4.5h12l-0.4 10c0 .6-.4.9-1 .9H2.6c-.6 0-1-.3-1-.9z" fill="#2a5fd4"/><rect x="4" y="6.2" width="1.2" height="7.6" rx=".5" fill="#fff"/><rect x="6.8" y="6.2" width="1.2" height="7.6" rx=".5" fill="#fff"/><rect x="9.4" y="6.2" width="1.2" height="7.6" rx=".5" fill="#fff"/></svg><span class="c" style="left:92px"><span style="letter-spacing:1.1px">OSLO</span> Storage Unit/Shelf</span><span class="c" style="left:373px"><span style="letter-spacing:1.1px">OSLO</span> Storage Unit/Shelf</span><span class="c" style="left:598px">PCS</span><span class="c" style="left:710px">1.00</span><span class="c" style="left:823px">1,601.58</span><span class="c" style="left:991px">15.00</span><span class="c" style="left:1104px">1,361.34</span></div>
<div class="row" style="top:730px"><span class="cb"></span><svg class="tr" width="15" height="16" viewBox="0 0 15 16"><path d="M4.2 3.6C4.2 1.6 5.2 0.8 7.1 0.8S10 1.6 10 3.6" stroke="#2a5fd4" stroke-width="1.5" fill="none"/><rect x="0.2" y="3" width="14.2" height="2.2" rx="1" fill="#2a5fd4"/><path d="M1.2 4.5h12l-0.4 10c0 .6-.4.9-1 .9H2.6c-.6 0-1-.3-1-.9z" fill="#2a5fd4"/><rect x="4" y="6.2" width="1.2" height="7.6" rx=".5" fill="#fff"/><rect x="6.8" y="6.2" width="1.2" height="7.6" rx=".5" fill="#fff"/><rect x="9.4" y="6.2" width="1.2" height="7.6" rx=".5" fill="#fff"/></svg><span class="c" style="left:92px">Loudspeaker, Black, 120W</span><span class="c" style="left:373px">Loudspeaker, Black, 120W</span><span class="c" style="left:598px">PCS</span><span class="c" style="left:710px">5.00</span><span class="c" style="left:823px">1,101.34</span><span class="c" style="left:991px">0.00</span><span class="c" style="left:1104px">5,506.68</span></div>
<div class="row" style="top:764px"><span class="cb"></span><svg class="tr" width="15" height="16" viewBox="0 0 15 16"><path d="M4.2 3.6C4.2 1.6 5.2 0.8 7.1 0.8S10 1.6 10 3.6" stroke="#2a5fd4" stroke-width="1.5" fill="none"/><rect x="0.2" y="3" width="14.2" height="2.2" rx="1" fill="#2a5fd4"/><path d="M1.2 4.5h12l-0.4 10c0 .6-.4.9-1 .9H2.6c-.6 0-1-.3-1-.9z" fill="#2a5fd4"/><rect x="4" y="6.2" width="1.2" height="7.6" rx=".5" fill="#fff"/><rect x="6.8" y="6.2" width="1.2" height="7.6" rx=".5" fill="#fff"/><rect x="9.4" y="6.2" width="1.2" height="7.6" rx=".5" fill="#fff"/></svg><span class="c" style="left:92px">Bicycle</span><span class="c" style="left:373px">Bicycle</span><span class="c" style="left:598px">PCS</span><span class="c" style="left:710px">1.00</span><span class="c" style="left:823px">5,856.75</span><span class="c" style="left:991px">0.00</span><span class="c" style="left:1104px">5,856.75</span></div>
<div class="row" style="top:797px"><span class="cb"></span><svg class="tr" width="15" height="16" viewBox="0 0 15 16"><path d="M4.2 3.6C4.2 1.6 5.2 0.8 7.1 0.8S10 1.6 10 3.6" stroke="#2a5fd4" stroke-width="1.5" fill="none"/><rect x="0.2" y="3" width="14.2" height="2.2" rx="1" fill="#2a5fd4"/><path d="M1.2 4.5h12l-0.4 10c0 .6-.4.9-1 .9H2.6c-.6 0-1-.3-1-.9z" fill="#2a5fd4"/><rect x="4" y="6.2" width="1.2" height="7.6" rx=".5" fill="#fff"/><rect x="6.8" y="6.2" width="1.2" height="7.6" rx=".5" fill="#fff"/><rect x="9.4" y="6.2" width="1.2" height="7.6" rx=".5" fill="#fff"/></svg><span class="c" style="left:92px">Touring Bicycle</span><span class="c" style="left:373px">Touring Bicycle</span><span class="c" style="left:598px">PCS</span><span class="c" style="left:710px">1.00</span><span class="c" style="left:823px">4,000.00</span><span class="c" style="left:991px">0.00</span><span class="c" style="left:1104px">5,000.00</span></div>
<div class="row" style="top:831px"><span class="cb"></span><svg class="tr" width="15" height="16" viewBox="0 0 15 16"><path d="M4.2 3.6C4.2 1.6 5.2 0.8 7.1 0.8S10 1.6 10 3.6" stroke="#2a5fd4" stroke-width="1.5" fill="none"/><rect x="0.2" y="3" width="14.2" height="2.2" rx="1" fill="#2a5fd4"/><path d="M1.2 4.5h12l-0.4 10c0 .6-.4.9-1 .9H2.6c-.6 0-1-.3-1-.9z" fill="#2a5fd4"/><rect x="4" y="6.2" width="1.2" height="7.6" rx=".5" fill="#fff"/><rect x="6.8" y="6.2" width="1.2" height="7.6" rx=".5" fill="#fff"/><rect x="9.4" y="6.2" width="1.2" height="7.6" rx=".5" fill="#fff"/></svg><span class="c" style="left:92px">Front Wheel</span><span class="c" style="left:373px">Front Wheel</span><span class="c" style="left:598px">PCS</span><span class="c" style="left:710px">1.00</span><span class="c" style="left:823px">980.00</span><span class="c" style="left:991px">0.00</span><span class="c" style="left:1104px">1,225.00</span></div>
<div class="row" style="top:864px"><span class="cb"></span><svg class="tr" width="15" height="16" viewBox="0 0 15 16"><path d="M4.2 3.6C4.2 1.6 5.2 0.8 7.1 0.8S10 1.6 10 3.6" stroke="#2a5fd4" stroke-width="1.5" fill="none"/><rect x="0.2" y="3" width="14.2" height="2.2" rx="1" fill="#2a5fd4"/><path d="M1.2 4.5h12l-0.4 10c0 .6-.4.9-1 .9H2.6c-.6 0-1-.3-1-.9z" fill="#2a5fd4"/><rect x="4" y="6.2" width="1.2" height="7.6" rx=".5" fill="#fff"/><rect x="6.8" y="6.2" width="1.2" height="7.6" rx=".5" fill="#fff"/><rect x="9.4" y="6.2" width="1.2" height="7.6" rx=".5" fill="#fff"/></svg><span class="c" style="left:92px">Bicycle</span><span class="c" style="left:373px">Bicycle</span><span class="c" style="left:598px">PCS</span><span class="c" style="left:710px">1.00</span><span class="c" style="left:823px">5,856.75</span><span class="c" style="left:991px">0.00</span><span class="c" style="left:1104px">5,856.75</span></div>
<div class="row" style="top:898px"><span class="cb"></span><svg class="tr" width="15" height="16" viewBox="0 0 15 16"><path d="M4.2 3.6C4.2 1.6 5.2 0.8 7.1 0.8S10 1.6 10 3.6" stroke="#2a5fd4" stroke-width="1.5" fill="none"/><rect x="0.2" y="3" width="14.2" height="2.2" rx="1" fill="#2a5fd4"/><path d="M1.2 4.5h12l-0.4 10c0 .6-.4.9-1 .9H2.6c-.6 0-1-.3-1-.9z" fill="#2a5fd4"/><rect x="4" y="6.2" width="1.2" height="7.6" rx=".5" fill="#fff"/><rect x="6.8" y="6.2" width="1.2" height="7.6" rx=".5" fill="#fff"/><rect x="9.4" y="6.2" width="1.2" height="7.6" rx=".5" fill="#fff"/></svg><span class="c" style="left:92px"><span style="letter-spacing:1.1px">INNSBRUCK</span> Storage Unit/G.Door</span><span class="c" style="left:373px"><span style="letter-spacing:1.1px">INNSBRUCK</span> Storage Unit/G...</span><span class="c" style="left:598px">PCS</span><span class="c" style="left:710px">2.00</span><span class="c" style="left:823px">2,950.54</span><span class="c" style="left:991px">15.00</span><span class="c" style="left:1104px">5,015.92</span></div>
<div class="row" style="top:931px"><span class="cb"></span><svg class="tr" width="15" height="16" viewBox="0 0 15 16"><path d="M4.2 3.6C4.2 1.6 5.2 0.8 7.1 0.8S10 1.6 10 3.6" stroke="#2a5fd4" stroke-width="1.5" fill="none"/><rect x="0.2" y="3" width="14.2" height="2.2" rx="1" fill="#2a5fd4"/><path d="M1.2 4.5h12l-0.4 10c0 .6-.4.9-1 .9H2.6c-.6 0-1-.3-1-.9z" fill="#2a5fd4"/><rect x="4" y="6.2" width="1.2" height="7.6" rx=".5" fill="#fff"/><rect x="6.8" y="6.2" width="1.2" height="7.6" rx=".5" fill="#fff"/><rect x="9.4" y="6.2" width="1.2" height="7.6" rx=".5" fill="#fff"/></svg><span class="c" style="left:92px">Loudspeaker, Cherry, 150W</span><span class="c" style="left:373px">Loudspeaker, Cherry, 150W</span><span class="c" style="left:598px">PCS</span><span class="c" style="left:710px">5.00</span><span class="c" style="left:823px">298.68</span><span class="c" style="left:991px">0.00</span><span class="c" style="left:1104px">1,493.39</span></div>

<div class="a" style="left:138px;top:1105px;width:1278px;height:1px;background:#e3e3e3"></div>
<div class="a" style="left:138px;top:1140px;width:1278px;height:1px;background:#e3e3e3"></div>
<div class="a" style="left:1399px;top:1105px;width:1px;height:35px;background:#ececec"></div>
<div class="a" style="left:849px;top:1114px;width:97px;overflow:hidden;font-size:13px;color:#333;letter-spacing:0.42px;white-space:nowrap">Total Quantity: 7</div>
<div class="a" style="left:1243px;top:1114px;font-size:13px;color:#3a3a3a;letter-spacing:0.52px;white-space:nowrap">Total Amount: 168740.57</div>
<div class="a" style="left:1367px;top:1128px;width:25px;height:24px;background:rgba(70,120,210,0.7)"></div>
<div class="a" style="left:1375.5px;top:1132px;width:3.5px;height:3.5px;border-radius:50%;background:#fff;box-shadow:0 6px 0 #fff,0 12px 0 #fff"></div>

<div id="footer"></div>
<svg class="a" style="left:170px;top:1196px" width="125" height="25" viewBox="0 0 125 25"><polygon points="5.8,3 19,3 26.1,12.3 17,21.8 2.5,21.8 10.6,12.3" fill="#1ca0dd"/><polygon points="28,2.9 37.3,2.9 32.7,9" fill="#1ca0dd"/><polygon points="28,21.8 37.3,21.8 32.7,15.3" fill="#111"/>
<path fill-rule="evenodd" fill="#0d0d0d" d="M41.9 2.9H51.5C56.3 2.9 58.9 5.6 58.9 9.4S56.3 15.9 51.5 15.9H47.2V21.8H41.9ZM47.2 7.2H51C52.8 7.2 53.8 8.1 53.8 9.4S52.8 11.6 51 11.6H47.2Z"/>
<path fill-rule="evenodd" fill="#0d0d0d" d="M57.8 21.8L65.3 2.9H71.7L79.2 21.8H73.5L72.2 18.3H64.8L63.5 21.8ZM66.3 14H70.7L68.5 8.2Z"/>
<path fill="#0d0d0d" d="M80.3 21.8V2.9H85.3L93.8 13.8V2.9H99.1V21.8H94.1L85.6 10.9V21.8Z"/>
<path fill="#0d0d0d" d="M102.3 2.9H111C117 2.9 121.1 6.8 121.1 12.35S117 21.8 111 21.8H102.3Z"/>
<path fill="#2f9be6" d="M103.6 9.2L106 8.2 108.5 8.6 110.5 7.3 113 7.6 115 8.8 117.5 9.5 119.3 11 119.5 12.6H103.4Z"/>
<path fill="#f0e03a" d="M103.4 12.6H119.5L118.8 14 116.5 14.6 114.8 16.2 112.5 16.5 111.5 17.8 110 16.6 108.2 16.2 106.5 15.2 104.5 14.5Z"/></svg>
<div class="a" style="left:321px;top:1202px;font-size:12.3px;color:#333;white-space:nowrap">© 2023 Xpand. All rights reserved.</div>
<div class="a" style="left:1223px;top:1202px;font-size:12.2px;color:#2b4fa8;white-space:nowrap;text-decoration:underline;text-underline-offset:2px">Privacy &amp; Cookies Policy</div>
<svg class="a" style="left:1389px;top:1198px" width="18" height="17" viewBox="0 0 18 17"><g fill="none" stroke="#555" stroke-width="1.6"><rect x="1" y="1" width="6" height="6"/><rect x="10.5" y="1" width="6" height="6"/><rect x="1" y="9.8" width="6" height="6"/></g><rect x="3.3" y="3.3" width="1.5" height="1.5" fill="#555"/><rect x="12.8" y="3.3" width="1.5" height="1.5" fill="#555"/><rect x="3.3" y="12" width="1.5" height="1.5" fill="#555"/><path d="M10 9.5h2.5v2.5h2v-2.5H17v4h-2v3h-2v-2h-3z" fill="#555"/></svg>
<svg class="a" style="left:0;top:1226px" width="12" height="12" viewBox="0 0 12 12"><path d="M0 0v12h12C5 12 1 8 1 0z" fill="#263238"/></svg>
<svg class="a" style="left:1420px;top:1226px" width="12" height="12" viewBox="0 0 12 12"><path d="M12 0v12H0c7 0 11-4 11-12z" fill="#263238"/></svg>
</body></html>
